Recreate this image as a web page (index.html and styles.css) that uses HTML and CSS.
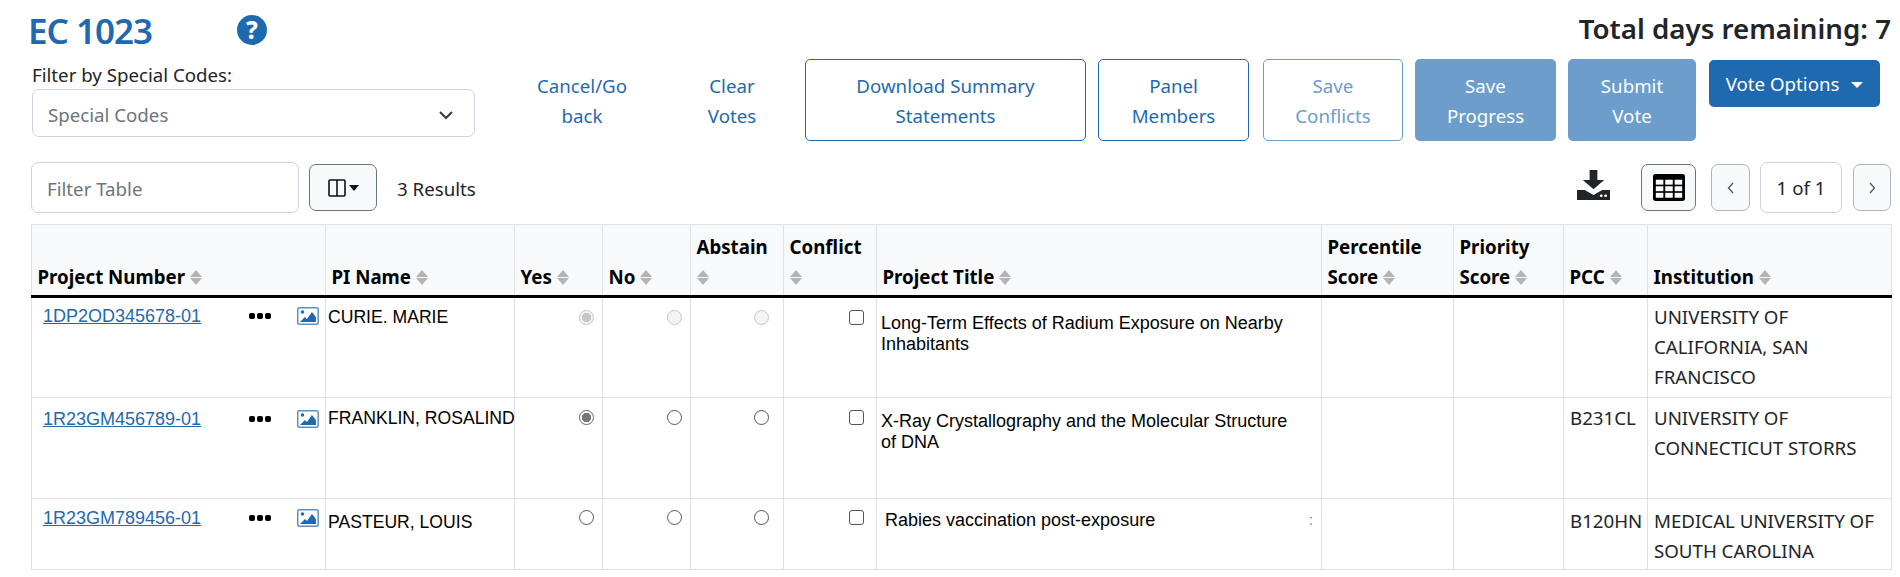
FILE: index.html
```html
<!DOCTYPE html>
<html lang="en">
<head>
  <meta charset="UTF-8" />
  <meta name="viewport" content="width=device-width, initial-scale=1.0"/>
  <title>EC 1023</title>
  <link rel="stylesheet" href="styles.css">
</head>
<body>
  <div class="page">
    <div class="title-row">
      <div class="title-left">
        <h1>EC 1023</h1>
        <span class="help">?</span>
      </div>
      <div class="days">Total days remaining: 7</div>
    </div>

    <div class="controls-row">
      <div class="special-filter">
        <label>Filter by Special Codes:</label>
        <div class="select-box">
          <span>Special Codes</span>
          <svg width="16" height="16" viewBox="0 0 16 16"><path d="M2 5l6 6 6-6" fill="none" stroke="#343a40" stroke-width="2"/></svg>
        </div>
      </div>
      <a class="btn btn-link cancel">Cancel/Go<br>back</a>
      <a class="btn btn-link clear">Clear<br>Votes</a>
      <a class="btn btn-outline download">Download Summary<br>Statements</a>
      <a class="btn btn-outline panel">Panel<br>Members</a>
      <a class="btn btn-outline faded conflicts">Save<br>Conflicts</a>
      <a class="btn btn-solid faded progress">Save<br>Progress</a>
      <a class="btn btn-solid faded submit">Submit<br>Vote</a>
      <a class="btn btn-solid vote">Vote Options <i class="caret"></i></a>
    </div>

    <div class="table-tools">
      <input class="filter-input" type="text" placeholder="Filter Table">
      <button class="tool-btn columns">
        <svg width="18" height="18" viewBox="0 0 18 18"><rect x="1" y="1" width="16" height="16" rx="1" fill="none" stroke="#111" stroke-width="1.6"/><path d="M9 1v16" stroke="#111" stroke-width="1.6"/></svg>
        <i class="caret dark"></i>
      </button>
      <span class="results">3 Results</span>
      <svg class="export" width="33" height="30" viewBox="0 0 34 36" preserveAspectRatio="none">
        <path d="M13 0h8v12h7L17 23 6 12h7z" fill="#212529"/>
        <path d="M0 24h8l9 6 9-6h8v12H0z" fill="#212529"/>
        <circle cx="25" cy="31" r="1.5" fill="#fff"/><circle cx="29.500" cy="31" r="1.500" fill="#fff"/>
      </svg>
      <button class="tool-btn grid">
        <svg width="32" height="27" viewBox="0 0 34 33" preserveAspectRatio="none">
          <rect width="34" height="33" rx="3" fill="#000"/>
          <g fill="#fff">
            <rect x="3" y="7" width="8" height="6"/><rect x="13" y="7" width="8" height="6"/><rect x="23" y="7" width="8" height="6"/>
            <rect x="3" y="15" width="8" height="6"/><rect x="13" y="15" width="8" height="6"/><rect x="23" y="15" width="8" height="6"/>
            <rect x="3" y="23" width="8" height="6"/><rect x="13" y="23" width="8" height="6"/><rect x="23" y="23" width="8" height="6"/>
          </g>
        </svg>
      </button>
      <button class="page-btn prev"><svg width="10" height="14" viewBox="0 0 10 14"><path d="M7 2L2.500 7 7 12" fill="none" stroke="#555" stroke-width="1.300"/></svg></button>
      <div class="page-count">1 of 1</div>
      <button class="page-btn next"><svg width="10" height="14" viewBox="0 0 10 14"><path d="M3 2l4.500 5L3 12" fill="none" stroke="#555" stroke-width="1.300"/></svg></button>
    </div>

    <table class="votes">
      <colgroup>
        <col class="c-project"><col class="c-pi"><col class="c-vote"><col class="c-vote"><col class="c-wide"><col class="c-wide">
        <col class="c-title"><col class="c-pct"><col class="c-pri"><col class="c-pcc"><col class="c-inst">
      </colgroup>
      <thead>
        <tr>
          <th>Project Number <i class="sort"></i></th>
          <th>PI Name <i class="sort"></i></th>
          <th>Yes <i class="sort"></i></th>
          <th>No <i class="sort"></i></th>
          <th>Abstain <i class="sort"></i></th>
          <th>Conflict <i class="sort"></i></th>
          <th>Project Title <i class="sort"></i></th>
          <th>Percentile Score <i class="sort"></i></th>
          <th>Priority Score <i class="sort"></i></th>
          <th>PCC <i class="sort"></i></th>
          <th>Institution <i class="sort"></i></th>
        </tr>
      </thead>
      <tbody>
        <tr class="row-one">
          <td>
            <div class="project-cell">
              <a class="project-link">1DP2OD345678-01</a>
              <span class="dots"><b></b><b></b><b></b></span>
              <svg class="pic" width="22" height="18" viewBox="0 0 22 18"><rect x=".75" y=".75" width="20.500" height="16.500" rx="1.500" fill="#fff" stroke="#5b8fc6" stroke-width="1.500"/><circle cx="5.500" cy="5" r="1.800" fill="#1f69b0"/><path d="M3 15l5-5 2 2 5-7 4 5v5z" fill="#1f69b0"/></svg>
            </div>
          </td>
          <td class="name">CURIE. MARIE</td>
          <td class="mark yes"><span class="radio off picked"></span></td>
          <td class="mark no"><span class="radio off"></span></td>
          <td class="mark abstain"><span class="radio off"></span></td>
          <td class="mark conflict"><span class="check"></span></td>
          <td class="project-title">Long-Term Effects of Radium Exposure on Nearby Inhabitants</td>
          <td></td><td></td><td class="plain"></td>
          <td class="plain">UNIVERSITY OF CALIFORNIA, SAN FRANCISCO</td>
        </tr>
        <tr class="row-two">
          <td>
            <div class="project-cell">
              <a class="project-link">1R23GM456789-01</a>
              <span class="dots"><b></b><b></b><b></b></span>
              <svg class="pic" width="22" height="18" viewBox="0 0 22 18"><rect x=".75" y=".75" width="20.500" height="16.500" rx="1.500" fill="#fff" stroke="#5b8fc6" stroke-width="1.500"/><circle cx="5.500" cy="5" r="1.800" fill="#1f69b0"/><path d="M3 15l5-5 2 2 5-7 4 5v5z" fill="#1f69b0"/></svg>
            </div>
          </td>
          <td class="name">FRANKLIN, ROSALIND</td>
          <td class="mark yes"><span class="radio picked"></span></td>
          <td class="mark no"><span class="radio"></span></td>
          <td class="mark abstain"><span class="radio"></span></td>
          <td class="mark conflict"><span class="check"></span></td>
          <td class="project-title">X-Ray Crystallography and the Molecular Structure of DNA</td>
          <td></td><td></td><td class="plain">B231CL</td>
          <td class="plain">UNIVERSITY OF CONNECTICUT STORRS</td>
        </tr>
        <tr class="row-three">
          <td>
            <div class="project-cell">
              <a class="project-link">1R23GM789456-01</a>
              <span class="dots"><b></b><b></b><b></b></span>
              <svg class="pic" width="22" height="18" viewBox="0 0 22 18"><rect x=".75" y=".75" width="20.500" height="16.500" rx="1.500" fill="#fff" stroke="#5b8fc6" stroke-width="1.500"/><circle cx="5.500" cy="5" r="1.800" fill="#1f69b0"/><path d="M3 15l5-5 2 2 5-7 4 5v5z" fill="#1f69b0"/></svg>
            </div>
          </td>
          <td class="name">PASTEUR, LOUIS</td>
          <td class="mark yes"><span class="radio"></span></td>
          <td class="mark no"><span class="radio"></span></td>
          <td class="mark abstain"><span class="radio"></span></td>
          <td class="mark conflict"><span class="check"></span></td>
          <td class="project-title">
            <div class="title-flex"><span>Rabies vaccination post-exposure</span><span class="colon">:</span></div>
          </td>
          <td></td><td></td><td class="plain">B120HN</td>
          <td class="plain">MEDICAL UNIVERSITY OF SOUTH CAROLINA</td>
        </tr>
      </tbody>
    </table>
  </div>
</body>
</html>
```

FILE: styles.css
```css
body {
  margin: 0;
  background: white;
  color: #212529;
  font-family: "Noto Sans", "Open Sans", sans-serif;
  font-size: 18.7px;
}

.page {
  padding: 0 9px 0 31px;
}

.title-row {
  display: flex;
  justify-content: space-between;
  height: 59px;
}

.title-left {
  display: flex;
  align-items: flex-start;
}

h1 {
  margin: 9px 0 0 -3px;
  width: 209px;
  color: #1f69b0;
  font-size: 35px;
  line-height: 44px;
  font-weight: 600;
  letter-spacing: -1px;
}

.help {
  display: block;
  width: 30px;
  height: 30px;
  margin-top: 15px;
  border-radius: 50%;
  background: #1f69b0;
  color: white;
  font-size: 24px;
  font-weight: 800;
  line-height: 30px;
  text-align: center;
}

.days {
  margin-top: 10px;
  color: #212529;
  font-size: 27.7px;
  font-weight: 600;
  line-height: 36px;
}

.controls-row {
  display: flex;
  align-items: flex-start;
  height: 82px;
}

.special-filter {
  width: 443px;
  margin-left: 1px;
}

.special-filter label {
  display: block;
  height: 30px;
  margin-top: 1px;
  line-height: 30px;
}

.select-box {
  display: flex;
  justify-content: space-between;
  align-items: center;
  box-sizing: border-box;
  height: 48px;
  margin-top: -1px;
  padding: 3px 20px 0 15px;
  border: 1px solid #ced4da;
  border-radius: 7px;
  color: #6c757d;
}

.btn {
  display: block;
  box-sizing: border-box;
  height: 82px;
  padding: 11px 0 0;
  border: 1px solid transparent;
  border-radius: 5px;
  color: #1f69b0;
  line-height: 30px;
  text-align: center;
}

.btn-outline {
  border-color: #1f69b0;
}

.btn-solid {
  background: #1f69b0;
  color: white;
}

.btn-outline.faded {
  border-color: #6c9dcb;
  color: #6c9dcb;
}

.btn-solid.faded {
  background: #6c9dcb;
}

.cancel { width: 120px; margin-left: 47px; }
.clear { width: 90px; margin-left: 45px; }
.download { width: 281px; margin-left: 28px; }
.panel { width: 151px; margin-left: 12px; }
.conflicts { width: 140px; margin-left: 14px; }
.progress { width: 141px; margin-left: 12px; }
.submit { width: 128px; margin-left: 12px; }

.vote {
  width: 171px;
  height: 47px;
  margin-top: 1px;
  margin-left: 13px;
  padding: 8px 0 0;
  white-space: nowrap;
}

.caret {
  display: inline-block;
  margin-left: 7px;
  vertical-align: 3px;
  border-top: 6px solid white;
  border-left: 6px solid transparent;
  border-right: 6px solid transparent;
}

.caret.dark {
  margin-left: 3px;
  vertical-align: 0;
  border-top-color: #111;
  border-left-width: 5px;
  border-right-width: 5px;
}

.table-tools {
  display: flex;
  align-items: center;
  height: 51px;
  margin-top: 21px;
}

.filter-input {
  box-sizing: border-box;
  width: 268px;
  height: 51px;
  padding: 2px 15px 0;
  border: 1px solid #ced4da;
  border-radius: 7px;
  font-family: inherit;
  font-size: 18.7px;
}

.filter-input::placeholder {
  color: #6c757d;
}

.tool-btn {
  display: flex;
  align-items: center;
  justify-content: center;
  height: 47px;
  padding: 0;
  border: 1px solid #6c757d;
  border-radius: 7px;
  background: #f8f9fa;
}

.columns {
  width: 68px;
  margin-left: 10px;
}

.results {
  margin-left: 20px;
  padding-top: 2px;
}

.export {
  margin-left: auto;
  margin-top: -5px;
}

.grid {
  width: 55px;
  margin-left: 31px;
}

.page-btn {
  display: flex;
  align-items: center;
  justify-content: center;
  width: 39px;
  height: 47px;
  padding: 0;
  border: 1px solid #adb5bd;
  border-radius: 7px;
  background: #f8f9fa;
}

.prev {
  margin-left: 15px;
}

.next {
  width: 38px;
}

.page-count {
  box-sizing: border-box;
  width: 82px;
  height: 51px;
  margin: 0 11px 0 10px;
  border: 1px solid #ced4da;
  border-radius: 7px;
  line-height: 50px;
  text-align: center;
}

.votes {
  width: 1860px;
  margin-top: 11px;
  border-collapse: collapse;
  table-layout: fixed;
}

.c-project { width: 294px; }
.c-pi { width: 189px; }
.c-vote { width: 88px; }
.c-wide { width: 93px; }
.c-title { width: 445px; }
.c-pct { width: 132px; }
.c-pri { width: 110px; }
.c-pcc { width: 84px; }
.c-inst { width: 244px; }

.votes th, .votes td {
  border: 1px solid #dee2e6;
  vertical-align: top;
}

.votes th {
  box-sizing: border-box;
  height: 72px;
  padding: 4px 6px 3px 5.5px;
  border-bottom: 3px solid black;
  background: #f8f9fa;
  color: black;
  font-weight: 700;
  line-height: 30px;
  text-align: left;
  vertical-align: bottom;
}

.sort {
  display: inline-block;
  vertical-align: -1px;
  width: 12px;
}

.sort::before, .sort::after {
  content: "";
  display: block;
  border-left: 6px solid transparent;
  border-right: 6px solid transparent;
}

.sort::before {
  margin-bottom: 1px;
  border-bottom: 7px solid #b4b4b4;
}

.sort::after {
  border-top: 7px solid #b4b4b4;
}

.row-one td { height: 101px; }
.row-two td { height: 101px; }
.row-three td { height: 71px; }

.votes td {
  box-sizing: border-box;
  padding: 6px;
  line-height: 30px;
}

.votes td.plain {
  padding: 6.5px 6px 0;
  color: #212529;
}

.votes .row-one td.plain {
  padding-top: 3.5px;
}

.votes .row-two td.plain {
  padding-top: 4.5px;
}

.project-cell {
  display: flex;
  align-items: center;
  height: 26px;
  padding-left: 5px;
}

.row-one .project-cell {
  margin-top: -1px;
}

.row-two .project-cell {
  margin-top: 2px;
}

.project-link {
  width: 207px;
  color: #1f69b0;
  font-family: "Liberation Sans", Arial, sans-serif;
  font-size: 18px;
  text-decoration: underline;
}

.dots {
  display: flex;
  gap: 2px;
}

.dots b {
  width: 6px;
  height: 6px;
  border-radius: 2px;
  background: black;
}

.pic {
  margin-left: 26px;
}

.votes td.name {
  padding: 4px 0 0 2px;
  color: black;
  font-family: "Liberation Sans", Arial, sans-serif;
  font-size: 17.6px;
  white-space: nowrap;
}

.votes .row-two td.name {
  padding-top: 5px;
}

.votes .row-three td.name {
  padding-top: 8px;
}

.votes td.mark {
  padding: 11px 10px 0 0;
  line-height: 0;
  text-align: right;
}

.votes .row-one td.mark, .votes .row-two td.mark {
  padding-top: 12px;
}

.votes td.yes, .votes td.no {
  padding-right: 8px;
}

.votes td.abstain {
  padding-right: 14px;
}

.votes td.conflict {
  padding-right: 12px;
}

.radio {
  display: inline-block;
  box-sizing: border-box;
  width: 15px;
  height: 15px;
  border: 1px solid #555;
  border-radius: 50%;
}

.radio.picked {
  border-color: #666;
  background: radial-gradient(circle, #777 0 4.500px, white 5px);
}

.radio.off {
  border-color: #c6c6c6;
  background: #f4f4f4;
}

.radio.off.picked {
  background: radial-gradient(circle, #c8c8c8 0 4.500px, #f4f4f4 5px);
}

.check {
  display: inline-block;
  box-sizing: border-box;
  width: 15px;
  height: 15px;
  border: 1px solid #555;
  border-radius: 3px;
}

.votes td.project-title {
  padding: 13px 26px 0 4px;
  color: black;
  font-family: "Liberation Sans", Arial, sans-serif;
  font-size: 18px;
  line-height: 21px;
}

.votes .row-one td.project-title {
  padding-top: 15px;
}

.title-flex {
  display: flex;
  justify-content: space-between;
  margin: -2px -18px 0 4px;
}

.colon {
  color: #5a6f8a;
  font-size: 14px;
}
```
